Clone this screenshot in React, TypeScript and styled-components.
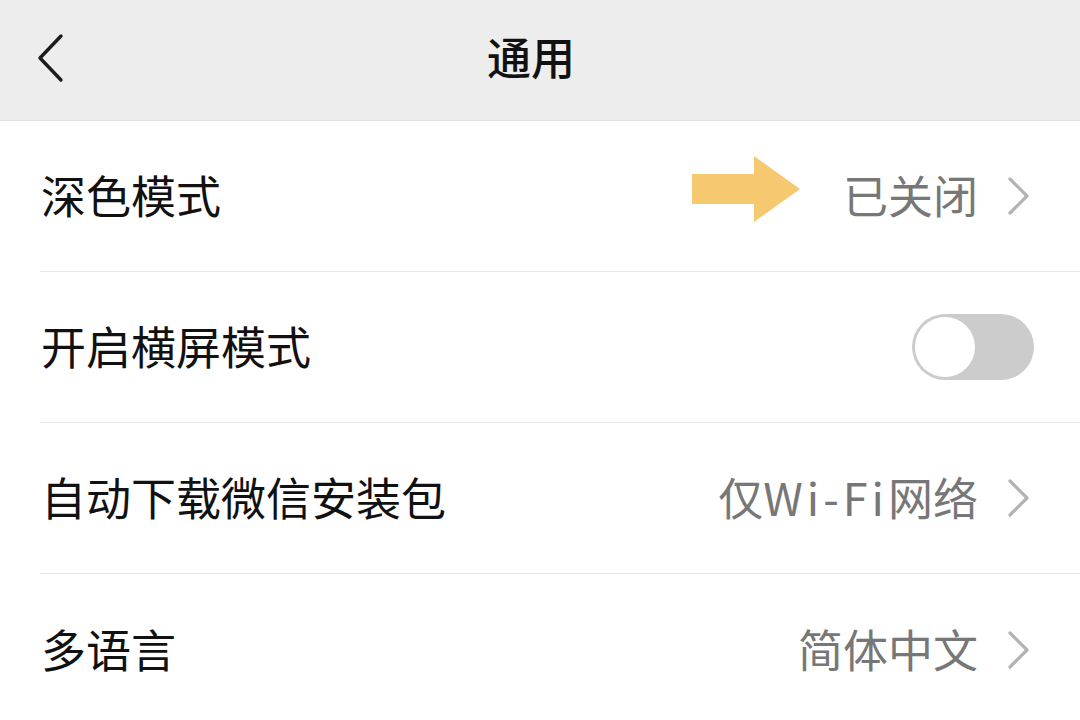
import React from "react";
import styled, { createGlobalStyle } from "styled-components";

const Global = createGlobalStyle`
  html, body { margin: 0; padding: 0; background: #ffffff; }
  body { font-family: "Noto Sans CJK SC", "Noto Sans", sans-serif; }
  * { box-sizing: border-box; }
`;

const Page = styled.div`
  width: 1080px;
  height: 720px;
  overflow: hidden;
  background: #ffffff;
`;

const Header = styled.header`
  height: 121px;
  background: #ededed;
  border-bottom: 1px solid #e2e2e2;
  display: grid;
  grid-template-columns: 120px 1fr 120px;
  align-items: center;
`;

const BackButton = styled.div`
  display: flex;
  align-items: center;
  padding-left: 36px;
  margin-top: -4px;
`;

const Title = styled.h1`
  margin: 0;
  text-align: center;
  font-size: 44px;
  font-weight: 500;
  color: #111111;
  margin-top: -8px;
  margin-left: -18px;
`;

const List = styled.div`
  display: flex;
  flex-direction: column;
`;

const Row = styled.div<{ $last?: boolean }>`
  height: 151px;
  margin-left: 40px;
  padding-right: 50px;
  display: flex;
  align-items: center;
  border-bottom: ${(p) => (p.$last ? "none" : "1px solid #e6e6e6")};
`;

const Label = styled.span`
  flex: 1;
  font-size: 45px;
  color: #111111;
  padding-left: 1px;
  margin-top: -3px;
`;

const Value = styled.span`
  font-size: 45px;
  color: #777777;
  margin-right: 30px;
  margin-top: -3px;
`;

const Latin = styled.span`
  letter-spacing: 4px;
`;

const Chevron = styled.svg`
  width: 22px;
  height: 38px;
  flex: none;
`;

const Toggle = styled.div`
  width: 122px;
  height: 66px;
  border-radius: 33px;
  background: #cccccc;
  padding: 3px;
  display: flex;
  align-items: center;
  margin-right: -4px;
`;

const Knob = styled.div`
  width: 60px;
  height: 60px;
  border-radius: 50%;
  background: #ffffff;
`;

const ArrowMark = styled.svg`
  width: 108px;
  height: 66px;
  margin-right: 43px;
  margin-bottom: 14px;
  flex: none;
`;

const ChevronRight = () => (
  <Chevron viewBox="0 0 22 38">
    <polyline points="2,2 19,19 2,36" fill="none" stroke="#b3b3b3" strokeWidth="3.2" strokeLinecap="round" strokeLinejoin="round" />
  </Chevron>
);

export default function App() {
  return (
    <Page>
      <Global />
      <Header>
        <BackButton>
          <svg width="30" height="50" viewBox="0 0 30 50">
            <polyline points="25,3 4,25 25,47" fill="none" stroke="#1c1c1c" strokeWidth="3.4" strokeLinecap="round" strokeLinejoin="round" />
          </svg>
        </BackButton>
        <Title>通用</Title>
        <div />
      </Header>
      <List>
        <Row>
          <Label>深色模式</Label>
          <ArrowMark viewBox="0 0 108 66">
            <polygon points="0,18 62,18 62,0 108,33 62,66 62,48 0,48" fill="#f6c970" />
          </ArrowMark>
          <Value>已关闭</Value>
          <ChevronRight />
        </Row>
        <Row>
          <Label>开启横屏模式</Label>
          <Toggle>
            <Knob />
          </Toggle>
        </Row>
        <Row>
          <Label>自动下载微信安装包</Label>
          <Value>
            仅<Latin>Wi-Fi</Latin>网络
          </Value>
          <ChevronRight />
        </Row>
        <Row $last>
          <Label>多语言</Label>
          <Value>简体中文</Value>
          <ChevronRight />
        </Row>
      </List>
    </Page>
  );
}
